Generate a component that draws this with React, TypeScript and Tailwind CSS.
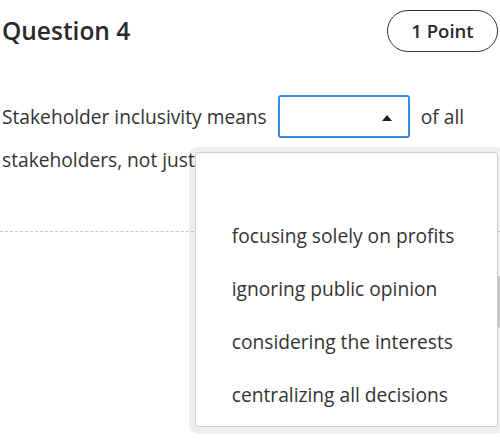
import React from 'react';

const OPTIONS = [
  '',
  'focusing solely on profits',
  'ignoring public opinion',
  'considering the interests',
  'centralizing all decisions',
];

function Caret() {
  return (
    <svg width="10" height="6" viewBox="0 0 10 6" className="absolute right-[16px] top-[18px]">
      <path d="M0 6 L5 0 L10 6 Z" fill="#222" />
    </svg>
  );
}

function Dropdown() {
  return (
    <div className="absolute left-[-85px] top-[55px] w-[303px] rounded-[3px] border border-[#cfcfcf] bg-white py-[4px] leading-normal shadow-[0_1px_0_6px_rgba(0,0,0,0.065)]">
      <div className="flex flex-col">
        {OPTIONS.map((o, i) => (
          <div key={i} className="flex h-[53px] items-center whitespace-nowrap pl-[36px] text-[19.2px] text-[#333]">
            {o}
          </div>
        ))}
      </div>
      <div className="absolute right-[-5px] top-[123px] h-[52px] w-[4px] rounded-sm bg-[#c4c4c4]" />
    </div>
  );
}

export default function App() {
  return (
    <div className="w-[500px] h-[446px] overflow-hidden bg-white text-[#333]" style={{ fontFamily: '"Open Sans", sans-serif' }}>
      <div className="mt-[10px] flex h-[42px] items-center justify-between px-[2px]">
        <h1 className="text-[24.5px] font-semibold text-[#2a2a2a]">Question 4</h1>
        <div className="flex h-[42px] w-[111px] items-center justify-center rounded-full border border-[#333] text-[18.5px] font-semibold text-[#2a2a2a]">
          1 Point
        </div>
      </div>

      <p className="mt-[43px] pl-[2px] text-[19.2px] leading-[43px]">
        Stakeholder inclusivity means
        <span className="relative ml-[11px] mr-[11px] inline-block h-[43px] w-[132px] align-top rounded-[3px] border-2 border-[#3a8be0] bg-white">
          <Caret />
          <Dropdown />
        </span>
        of all stakeholders, not just
      </p>

      <div className="mt-[50px] border-t border-dashed border-[#c8c8c8]" />
    </div>
  );
}
